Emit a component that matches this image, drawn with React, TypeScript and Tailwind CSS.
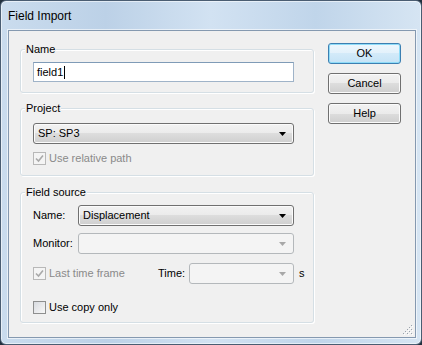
import React from "react";

function Arrow({ disabled }: { disabled?: boolean }) {
  return (
    <svg width="7" height="4" viewBox="0 0 7 4" className="shrink-0">
      <path d="M0 0 H7 L3.5 4 Z" fill={disabled ? "#a8a8a8" : "#000"} />
    </svg>
  );
}

function Combo({ text, disabled, className }: { text?: string; disabled?: boolean; className: string }) {
  const look = disabled
    ? "border-[#b4b8bb] bg-[#f4f4f4]"
    : "border-[#707070] bg-[linear-gradient(#f2f2f2_0%,#ebebeb_50%,#dddddd_50%,#cfcfcf_100%)] shadow-[inset_0_0_0_1px_#fbfbfb]";
  return (
    <div className={`flex h-[21px] shrink-0 items-center justify-between rounded-[3px] border pl-[4px] pr-[7px] ${look} ${className}`}>
      <span className="leading-[13px] text-black">{text}</span>
      <Arrow disabled={disabled} />
    </div>
  );
}

function Check({ checked, disabled }: { checked?: boolean; disabled?: boolean }) {
  return (
    <div
      className={`flex h-[13px] w-[13px] shrink-0 items-center justify-center border ${
        disabled ? "border-[#b8b8b8] bg-[#f4f4f4]" : "border-[#8e8f8f] bg-[linear-gradient(135deg,#d8dbe0,#f8f8f8)]"
      }`}
    >
      {checked && (
        <svg width="11" height="11" viewBox="0 0 11 11">
          <path d="M2 5.5 L4.5 8 L9 2.5" fill="none" stroke={disabled ? "#a9a9a9" : "#333"} strokeWidth="1.6" />
        </svg>
      )}
    </div>
  );
}

function Button({ label, def }: { label: string; def?: boolean }) {
  const look = def
    ? "border-[#3c7fb1] shadow-[inset_0_0_0_1px_#8fdcf8] bg-[linear-gradient(#eef7fd_0%,#e2f1fb_50%,#d3eaf9_50%,#c5e3f6_100%)]"
    : "border-[#707070] shadow-[inset_0_0_0_1px_#fbfbfb] bg-[linear-gradient(#f2f2f2_0%,#ebebeb_50%,#dddddd_50%,#cfcfcf_100%)]";
  return (
    <div className={`flex h-[21px] w-[73px] items-center justify-center rounded-[3px] border leading-[13px] text-black ${look}`}>
      {label}
    </div>
  );
}

function Group({ title, className, children }: { title: string; className?: string; children: React.ReactNode }) {
  return (
    <fieldset
      className={`w-[294px] min-w-0 rounded-[3px] border border-[#d5dfe5] p-0 shadow-[inset_1px_1px_0_#ffffff,1px_1px_0_#ffffff] ${className ?? ""}`}
    >
      <legend className="ml-[4px] bg-[#f0f0f0] px-[1px] leading-[13px] text-black">{title}</legend>
      {children}
    </fieldset>
  );
}

export default function App() {
  return (
    <div className="h-[345px] w-[422px] bg-[#22303e] font-['Liberation_Sans',Arial,sans-serif] text-[11px]">
      <div className="flex h-full flex-col rounded-[6px] border border-[#4a5d72] bg-[linear-gradient(90deg,#cadcee_0%,#bcd1e7_25%,#d2e2f2_50%,#c0d5ea_75%,#d6e5f3_100%)] shadow-[inset_0_0_0_1px_rgba(255,255,255,0.55)]">
        {/* title bar */}
        <div className="flex h-[29px] shrink-0 items-center pl-[7px] pt-[2px]">
          <span className="text-[12px] leading-[15px] text-black">Field Import</span>
        </div>
        {/* client */}
        <div className="flex-1 pb-[6px] pl-[7px] pr-[5px]">
          <div className="relative flex h-full gap-[14px] border border-[#8599b0] bg-[#f0f0f0] pl-[11px] pt-[12px] shadow-[0_0_0_1px_rgba(255,255,255,0.6)]">
            {/* left column */}
            <div className="flex w-[294px] shrink-0 flex-col">
              <Group title="Name">
                <div className="pb-[10px] pl-[12px] pr-[19px] pt-[6px]">
                  <div className="flex h-[20px] items-center border border-[#9fb3c8] border-t-[#7f9bb7] bg-white pl-[3px]">
                    <span className="leading-[13px] text-black">field1</span>
                    <span className="ml-[1px] h-[13px] w-px bg-black" />
                  </div>
                </div>
              </Group>

              <Group title="Project" className="mt-[9px]">
                <div className="pb-[10px] pl-[12px] pr-[19px] pt-[8px]">
                  <Combo text="SP: SP3" className="w-[261px]" />
                  <div className="mt-[8px] flex h-[13px] items-center gap-[3px]">
                    <Check checked disabled />
                    <span className="leading-[13px] text-[#8a8a8a]">Use relative path</span>
                  </div>
                </div>
              </Group>

              <Group title="Field source" className="mt-[10px]">
                <div className="pb-[8px] pl-[12px] pr-[19px] pt-[6px]">
                  <div className="flex items-center">
                    <span className="w-[45px] leading-[13px] text-black">Name:</span>
                    <Combo text="Displacement" className="w-[216px]" />
                  </div>
                  <div className="mt-[7px] flex items-center">
                    <span className="w-[45px] leading-[13px] text-black">Monitor:</span>
                    <Combo disabled className="w-[216px]" />
                  </div>
                  <div className="mt-[9px] mr-[-19px] flex items-center">
                    <div className="flex w-[125px] shrink-0 items-center gap-[3px]">
                      <Check checked disabled />
                      <span className="leading-[13px] text-[#8a8a8a]">Last time frame</span>
                    </div>
                    <span className="w-[31px] shrink-0 leading-[13px] text-black">Time:</span>
                    <Combo disabled className="w-[105px]" />
                    <span className="ml-[5px] leading-[13px] text-black">s</span>
                  </div>
                  <div className="mt-[17px] flex h-[13px] items-center gap-[3px]">
                    <Check />
                    <span className="leading-[13px] text-black">Use copy only</span>
                  </div>
                </div>
              </Group>
            </div>

            {/* buttons */}
            <div className="flex flex-col gap-[9px]">
              <Button label="OK" def />
              <Button label="Cancel" />
              <Button label="Help" />
            </div>

            {/* size grip */}
            <svg className="absolute bottom-[1px] right-[1px]" width="12" height="12" viewBox="0 0 12 12">
              {[
                [10, 2], [10, 6], [10, 10], [6, 6], [6, 10], [2, 10], [8, 4], [8, 8], [4, 8],
              ].map(([x, y], i) => (
                <g key={i}>
                  <rect x={x} y={y} width="1" height="1" fill="#fff" />
                  <rect x={x - 1} y={y - 1} width="1" height="1" fill="#9aa3ad" />
                </g>
              ))}
            </svg>
          </div>
        </div>
      </div>
    </div>
  );
}
